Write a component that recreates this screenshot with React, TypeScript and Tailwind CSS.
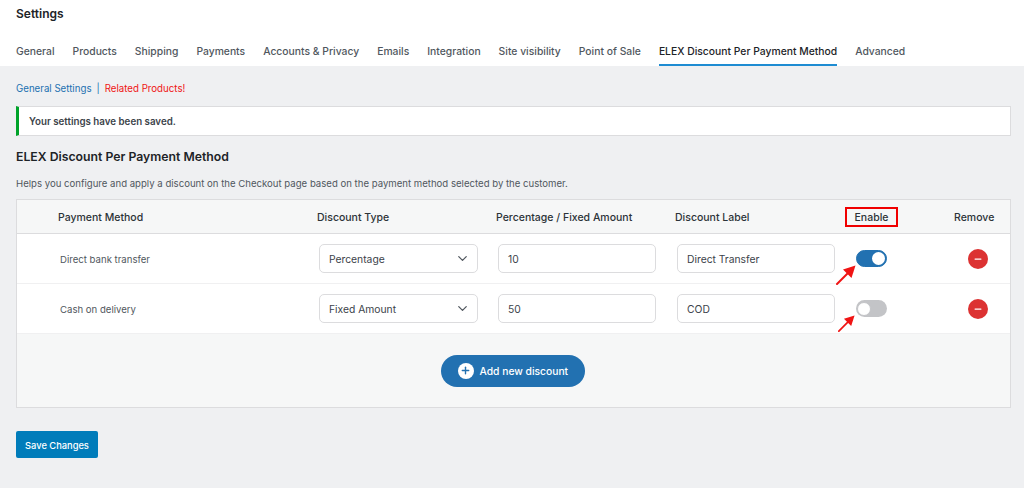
import { ChevronDown, Minus, Plus } from "lucide-react"

const tabs = [
  "General",
  "Products",
  "Shipping",
  "Payments",
  "Accounts & Privacy",
  "Emails",
  "Integration",
  "Site visibility",
  "Point of Sale",
  "ELEX Discount Per Payment Method",
  "Advanced",
]

const rowGrid = "grid grid-cols-[300px_179px_179px_170px_91px_1fr] items-center"

function Arrow({ small }: { small?: boolean }) {
  return (
    <svg
      className={
        small
          ? "absolute left-[-18px] top-[15px] h-[17px] w-[17px]"
          : "absolute left-[-20px] top-[15px] h-[20px] w-[20px]"
      }
      viewBox="0 0 20 20"
      fill="none"
    >
      <path d="M1 19 L13 7" stroke="#f01414" strokeWidth="2" strokeLinecap="round" />
      <path d="M19.5 0.5 L7 4.5 L15.5 13 Z" fill="#f01414" />
    </svg>
  )
}

function Toggle({ on }: { on: boolean }) {
  return (
    <div className="relative ml-[11px] w-[31px]">
      {on ? (
        <div className="flex h-[17px] w-[31px] items-center justify-end rounded-full border border-[#2271b1] bg-[#2271b1] pr-[1px]">
          <div className="h-[13px] w-[13px] rounded-full bg-white" />
        </div>
      ) : (
        <div className="flex h-[17px] w-[31px] items-center rounded-full bg-[#c3c4c7] pl-[1px]">
          <div className="h-[14px] w-[14px] rounded-full border border-[#c3c4c7] bg-white" />
        </div>
      )}
      <Arrow small={!on} />
    </div>
  )
}

function Field({ children, select }: { children: string; select?: boolean }) {
  return (
    <div
      className={`ml-[2px] flex h-[29px] items-center justify-between rounded-[5px] border border-[#dcdcde] bg-white pl-[9px] pr-[7px] text-[10.3px] text-[#3c434a] ${
        select ? "w-[159px]" : "w-[158px]"
      }`}
    >
      <span className="pt-[2px]">{children}</span>
      {select && <ChevronDown className="h-[15px] w-[15px] text-[#50575e]" strokeWidth={2} />}
    </div>
  )
}

function DiscountRow({
  name,
  type,
  amount,
  label,
  on,
}: {
  name: string
  type: string
  amount: string
  label: string
  on: boolean
}) {
  return (
    <div className={`${rowGrid} h-[50px] border-b border-[#f0f0f1] bg-white`}>
      <div className="pl-[43px] pt-[3px] text-[9.6px] text-[#50575e]">{name}</div>
      <Field select>{type}</Field>
      <Field>{amount}</Field>
      <Field>{label}</Field>
      <Toggle on={on} />
      <div className="pl-[32px]">
        <div className="flex h-[20px] w-[20px] items-center justify-center rounded-full bg-[#dc3232] text-white">
          <Minus className="h-[10px] w-[10px]" strokeWidth={3} />
        </div>
      </div>
    </div>
  )
}

export default function App() {
  return (
    <div className="h-[488px] w-[1024px] overflow-hidden bg-[#eff0f2] font-['Inter',sans-serif] text-[#3c434a]">
      <div className="h-[66px] bg-white px-4">
        <h1 className="pt-[6px] text-[12px] font-semibold leading-[15px] text-[#1d2327]">Settings</h1>
        <nav className="mt-[15px] flex gap-[18px]">
          {tabs.map((tab) => {
            const active = tab.startsWith("ELEX")
            return (
              <div
                key={tab}
                className={`h-[30px] pt-[8px] text-[10.35px] font-medium leading-[15px] ${
                  active ? "border-b-2 border-[#1e8cd2] text-[#1d2327]" : "text-[#50575e]"
                }`}
              >
                {tab}
              </div>
            )
          })}
        </nav>
      </div>

      <div className="px-4">
        <p className="flex gap-[5px] pt-[16px] text-[9.7px] leading-[14px]">
          <span className="text-[#2271b1]">General Settings</span>
          <span className="text-[#2271b1]">|</span>
          <span className="text-[#f01414]">Related Products!</span>
        </p>

        <div className="mt-[10px] flex h-[30px] w-[995px] items-center border border-l-[3px] border-[#dcdcde] border-l-[#00a32a] bg-white pl-[10px] pt-[2px] text-[9.75px] font-semibold text-[#3c434a]">
          Your settings have been saved.
        </div>

        <h2 className="mt-[12px] text-[12.25px] font-semibold leading-[17px] text-[#1d2327]">
          ELEX Discount Per Payment Method
        </h2>
        <p className="mt-[12px] text-[9.6px] leading-[14px] text-[#50575e]">
          Helps you configure and apply a discount on the Checkout page based on the payment method selected by the customer.
        </p>

        <div className="mt-[8px] w-[995px] border border-[#dcdcde] bg-[#f6f7f7]">
          <div className={`${rowGrid} h-[34px] border-b border-[#dcdcde] text-[10.5px] font-medium text-[#2c3338]`}>
            <div className="pl-[41px] pt-[2px]">Payment Method</div>
            <div className="pt-[2px]">Discount Type</div>
            <div className="pt-[2px]">Percentage / Fixed Amount</div>
            <div className="pt-[2px]">Discount Label</div>
            <div className="flex h-[20px] w-[53px] items-center justify-center border-2 border-[#f00000] pt-[2px]">Enable</div>
            <div className="pl-[18px] pt-[2px]">Remove</div>
          </div>

          <DiscountRow name="Direct bank transfer" type="Percentage" amount="10" label="Direct Transfer" on />
          <DiscountRow name="Cash on delivery" type="Fixed Amount" amount="50" label="COD" on={false} />

          <div className="flex h-[73px] items-center justify-center pr-[2px]">
            <button className="flex h-[32px] w-[144px] items-center gap-[6px] rounded-full bg-[#2271b1] pl-[17px] text-[10.3px] font-medium text-white">
              <span className="flex h-[16px] w-[16px] items-center justify-center rounded-full bg-white text-[#2271b1]">
                <Plus className="h-[11px] w-[11px]" strokeWidth={3} />
              </span>
              <span className="pt-[2px]">Add new discount</span>
            </button>
          </div>
        </div>

        <button className="mt-[23px] h-[27px] w-[82px] rounded-[2px] bg-[#007cba] pt-[2px] text-[9.3px] font-medium text-white">
          Save Changes
        </button>
      </div>
    </div>
  )
}
